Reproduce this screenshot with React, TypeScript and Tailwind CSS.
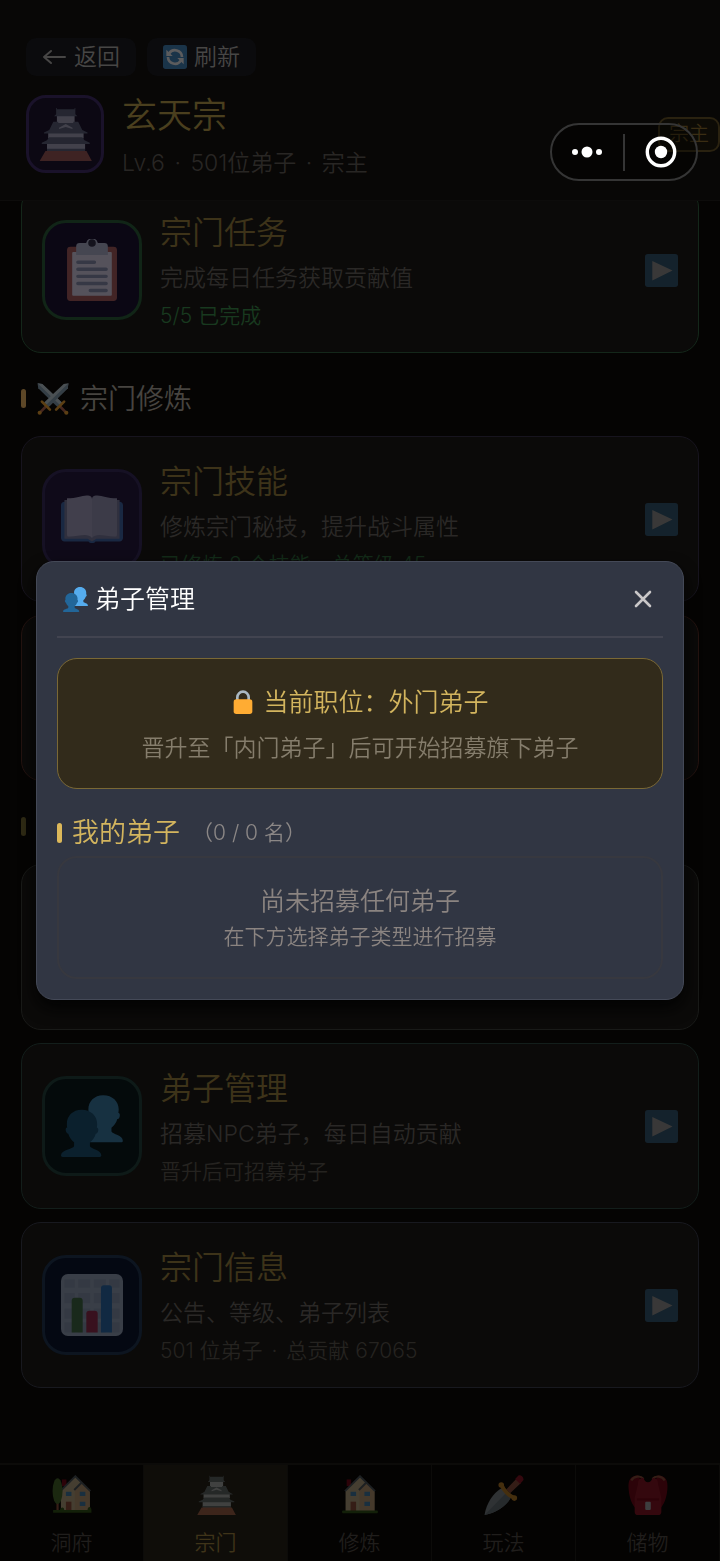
import * as React from "react"
import clsx from "clsx"

interface IconProps {
  className?: string
}

function CastleIcon({ className }: IconProps) {
  return (
    <svg viewBox="0 0 36 36" className={className} aria-hidden="true">
      <path fill="#CCD6DD" d="M12.6 5h11.8v6H12.6zM6.8 16h23.6v5H6.8zM6 24h25.4v4.5H6z" />
      <path fill="#66757F" d="M12.6.6v.9h11.8V.6h.5v4.2l1.4 1.4H10.700l1.400-1.400V.6z" />
      <path fill="#66757F" d="M10.200 9.800h3.300v.9h10v-.9h3.300l2.700 5.500 3.500 1.700v.6H4v-.6l3.500-1.700z" />
      <path fill="#CCD6DD" d="M18.500 11.300l4.500 2.500v.8l-4.500-1.300-4.500 1.300v-.8z" />
      <path fill="#66757F" d="M7.500 20.200h22l1.500 2 3.500 1.600v.8H2.500v-.8L6 22.200zM6 27.800h25.400v1.800H6z" />
      <path fill="#C1694F" d="M5 29.300h27.300L36 36.200H1z" />
    </svg>
  )
}

function ClipboardIcon({ className }: IconProps) {
  return (
    <svg viewBox="0 0 36 36" className={className} aria-hidden="true">
      <rect x="3.500" y="4.500" width="29" height="31.500" rx="2" fill="#C1694F" />
      <rect x="6.500" y="7.500" width="23" height="25.500" rx=".6" fill="#FFF" />
      <path fill="#CCD6DD" d="M10.800 2.300h3.800a3.500 3.500 0 0 1 6.800 0h3.800a2 2 0 0 1 2 2v5H8.800v-5a2 2 0 0 1 2-2z" />
      <circle cx="18" cy="2.300" r="2.200" fill="#292F33" />
      <path stroke="#99AAB5" strokeWidth="2" strokeLinecap="round" d="M9.800 13.500h9.600M9.800 17.600h16.400M9.800 21.700h16.400M9.800 25.800h16.400M17 29.900h9.200" />
    </svg>
  )
}

function SwordsIcon({ className }: IconProps) {
  return (
    <svg viewBox="0 0 36 36" className={className} aria-hidden="true">
      <path fill="#8CA9BF" d="M.6.400L6 1.200l22 20.800-5 5L1.400 6z" />
      <path fill="#CCDDE8" d="M.6.400L6 1.200l22 20.800-2.500 2.500z" />
      <path fill="#CCDDE8" d="M35.400.400L30 1.200 8 22l5 5L34.600 6z" />
      <path fill="#8CA9BF" d="M35.400.400L34.600 6 13 27l-2.500-2.500z" />
      <path fill="none" stroke="#BF6952" strokeWidth="3" d="M26 26.500l6.500 6.500M10 26.500L3.500 33" />
      <path fill="none" stroke="#FFAC33" strokeWidth="3" strokeLinecap="round" d="M30.500 21l-9 9M5.500 21l9 9" />
      <circle cx="33" cy="33.500" r="2.300" fill="#FFAC33" />
      <circle cx="3" cy="33.500" r="2.300" fill="#FFAC33" />
    </svg>
  )
}

function BookIcon({ className }: IconProps) {
  return (
    <svg viewBox="0 0 36 36" className={className} aria-hidden="true">
      <path fill="#3B88C3" d="M2 8h32c1.100 0 2 .9 2 2v19c0 1.100-.9 2-2 2H20c-.5 1.300-3.500 1.300-4 0H2c-1.100 0-2-.9-2-2V10c0-1.100.9-2 2-2z" />
      <path fill="#99AAB5" d="M2 7h32v22.500H20.500L18 31l-2.500-1.500H2z" />
      <path fill="#E1E8ED" d="M3.500 6C10 6 13 3.600 16.500 4.500c1 .3 1.500 1 1.500 2v22.500c-2.500-3.500-9-.5-13.500-.8-1 0-1-.9-1-1.700z" />
      <path fill="#CCD6DD" d="M32.500 6C26 6 23 3.600 19.500 4.500c-1 .3-1.500 1-1.500 2v22.500c2.500-3.500 9-.5 13.500-.8 1 0 1-.9 1-1.700z" />
    </svg>
  )
}

const BUST =
  "M12 8.600c-5.200 0-8.600 3.600-8.600 8.200 0 .9.1 1.400.2 2-.9.1-1 .9-.8 2 .2 1 .8 1.600 1.400 1.700.7 2.200 2 4 3.400 5v2.200C7 31.300 0 31.800 0 35c0 .7.300 1 1 1h21.400c.7 0 1-.3 1-1 0-3.200-6-3.700-6.600-5.300v-2.200c1.500-1 2.800-2.800 3.400-5 .8-.1 1.200-.7 1.400-1.700.2-1.100 0-1.800-.8-2 .1-.6.2-1.100.2-2 0-4.600-3.600-8.200-9-8.200z"

function PeopleIcon({ className }: IconProps) {
  return (
    <svg viewBox="0 0 36 36" className={className} aria-hidden="true">
      <path fill="#55ACEE" d={BUST} transform="translate(12.500 -8.500)" />
      <path fill="#226699" d={BUST} />
    </svg>
  )
}

function ChartIcon({ className }: IconProps) {
  return (
    <svg viewBox="0 0 36 36" className={className} aria-hidden="true">
      <rect width="36" height="36" rx="4" fill="#E1E8ED" />
      <path
        fill="#CCD6DD"
        d="M2 3h6v5H2zM10 3h7v5h-7zM19 3h7v5h-7zM28 3h6v5h-6zM2 11h6v6H2zM10 11h7v6h-7zM19 11h7v6h-7zM28 11h6v6h-6zM2 20h6v6H2zM10 20h7v6h-7zM19 20h7v6h-7zM28 20h6v6h-6zM2 28h6v6H2zM10 28h7v6h-7zM19 28h7v6h-7zM28 28h6v6h-6z"
      />
      <path fill="#5C913B" d="M6.200 34V15.500a1.700 1.700 0 0 1 1.700-1.700h3a1.700 1.700 0 0 1 1.700 1.700V34z" />
      <path fill="#DD2E44" d="M14.700 34V23a1.700 1.700 0 0 1 1.700-1.700h3.200a1.700 1.700 0 0 1 1.700 1.700v11z" />
      <path fill="#3B94D9" d="M23.200 34V8.200a1.700 1.700 0 0 1 1.700-1.700h3a1.700 1.700 0 0 1 1.700 1.700V34z" />
    </svg>
  )
}

function RefreshIcon({ className }: IconProps) {
  return (
    <svg viewBox="0 0 36 36" className={className} aria-hidden="true">
      <rect width="36" height="36" rx="4" fill="#3B88C3" />
      <path fill="none" stroke="#FFF" strokeWidth="4" d="M9 13A10.500 10.500 0 0 1 28.500 18M27 23A10.500 10.500 0 0 1 7.500 18" />
      <path fill="#FFF" d="M5 7v9.500h9.500zM31 29v-9.500h-9.500z" />
    </svg>
  )
}

function PlayIcon({ className }: IconProps) {
  return (
    <svg viewBox="0 0 36 36" className={className} aria-hidden="true">
      <rect width="36" height="36" rx="3" fill="#3B88C3" />
      <path fill="#FFF" d="M8 7.500l22 10.500L8 29z" />
    </svg>
  )
}

function LockIcon({ className }: IconProps) {
  return (
    <svg viewBox="0 0 36 36" className={className} aria-hidden="true">
      <path fill="none" stroke="#AAB8C2" strokeWidth="4" d="M9.500 18v-7a8.500 8.500 0 0 1 17 0v7" />
      <rect x="4" y="14" width="28" height="22" rx="4" fill="#FFAC33" />
    </svg>
  )
}

function House() {
  return (
    <>
      <path fill="#A0041E" d="M9 4h4v6H9z" />
      <path fill="#FFE8B6" d="M8 14L21 1.500 34 14v18.500H8z" />
      <path fill="#FFD2A0" d="M20.500 12.500l6-6L34 14v18.500H20.500z" />
      <path fill="none" stroke="#66757F" strokeWidth="1.800" d="M7.500 14.500L21 1.200l13.500 13.300M20 13.500l6.500-6.500" />
      <path fill="#55ACEE" d="M12.500 15h5v4h-5zM25 15h5v4h-5zM25 24h5v4h-5z" />
      <path fill="#C1694F" d="M12.500 24h5v9h-5z" />
    </>
  )
}

function GardenHouseIcon({ className }: IconProps) {
  return (
    <svg viewBox="0 0 36 36" className={className} aria-hidden="true">
      <House />
      <path fill="#C1694F" d="M4 22h2v10H4z" />
      <ellipse cx="5" cy="14.500" rx="4.500" ry="11.500" fill="#5C913B" />
      <path fill="#3E721D" d="M1 31.500h6c1-3 4-3 4 0h21c0-3.500 3.500-3.500 3.500 0V34H1z" />
    </svg>
  )
}

function HouseIcon({ className }: IconProps) {
  return (
    <svg viewBox="0 0 36 36" className={className} aria-hidden="true">
      <g transform="translate(-3 0)">
        <House />
      </g>
      <path fill="#3E721D" d="M2.500 32h31a1.500 1.500 0 0 1 0 2.500h-31a1.500 1.500 0 0 1 0-2.500z" />
    </svg>
  )
}

function DaggerIcon({ className }: IconProps) {
  return (
    <svg viewBox="0 0 36 36" className={className} aria-hidden="true">
      <path fill="#AAB8C2" d="M15.500 12l8.500 8.500C20.500 27.500 11 34 .5 36 2 26 8 16.500 15.500 12z" />
      <path fill="#8899A6" d="M19.800 16.200l4.200 4.300C20.500 27.500 11 34 .5 36z" />
      <path fill="#BF6952" d="M20 13l9-9.500 4 4-9.500 9z" />
      <path fill="none" stroke="#FFAC33" strokeWidth="3.500" strokeLinecap="round" d="M16 9.500c1.500 4 6.500 9.500 11 11" />
      <circle cx="15.500" cy="9" r="2.500" fill="#FFAC33" />
      <circle cx="27.300" cy="20.800" r="2.500" fill="#FFAC33" />
      <path fill="#BE1931" d="M28 3.500L31 .5c2-1 5 1.500 4.500 4L32.500 8z" />
    </svg>
  )
}

function BackpackIcon({ className }: IconProps) {
  return (
    <svg viewBox="0 0 36 36" className={className} aria-hidden="true">
      <path fill="#A0041E" d="M9 .500C2 .5 0 5 .5 12c.4 6 2 13 5.500 17h5V4zM27 .5C34 .5 36 5 35.500 12c-.4 6-2 13-5.500 17h-5V4z" />
      <path fill="none" stroke="#C1694F" strokeWidth="2" d="M3 5c2-4 8-5 11-1.500M33 5c-2-4-8-5-11-1.500" />
      <path fill="#BE1931" d="M9 8c0-4 2.500-6 5-5 1 2.500 2 3.500 4 3.500s3-1 4-3.500c2.500-1 5 1 5 5l3 13v12a3 3 0 0 1-3 3H9a3 3 0 0 1-3-3V21z" />
      <path fill="#A0041E" d="M8 21h20v2H8z" />
      <rect x="15.500" y="24" width="5" height="7.500" rx="1" fill="#E1E8ED" />
    </svg>
  )
}

interface SectCard {
  icon?: (props: IconProps) => React.ReactElement
  title?: string
  desc?: string
  status?: string[]
  statusClass?: string
  border: string
  iconBox?: string
  bright?: boolean
}

const TASK_CARDS: SectCard[] = [
  {
    icon: ClipboardIcon,
    title: "宗门任务",
    desc: "完成每日任务获取贡献值",
    status: ["5/5 已完成"],
    statusClass: "text-[#18391f]",
    border: "border-[#14271a]",
    iconBox: "border-[#112517] bg-[#0b0714]",
    bright: true,
  },
]

const TRAINING_CARDS: SectCard[] = [
  {
    icon: BookIcon,
    title: "宗门技能",
    desc: "修炼宗门秘技，提升战斗属性",
    status: ["已修炼 8 个技能，总等级 45"],
    statusClass: "text-[#132c19]",
    border: "border-[#17141e]",
    iconBox: "border-[#161124] bg-[#0f0a19]",
  },
  { border: "border-[#241310]" },
]

const MANAGE_CARDS: SectCard[] = [
  { border: "border-[#191a18]" },
  {
    icon: PeopleIcon,
    title: "弟子管理",
    desc: "招募NPC弟子，每日自动贡献",
    status: ["晋升后可招募弟子"],
    statusClass: "text-[#252320]",
    border: "border-[#131e1b]",
    iconBox: "border-[#0e1a18] bg-[#040a0b]",
  },
  {
    icon: ChartIcon,
    title: "宗门信息",
    desc: "公告、等级、弟子列表",
    status: ["501 位弟子", "总贡献 67065"],
    statusClass: "text-[#252320]",
    border: "border-[#18191f]",
    iconBox: "border-[#0d1520] bg-[#040812]",
  },
]

const NAV_ITEMS = [
  { label: "洞府", icon: GardenHouseIcon },
  { label: "宗门", icon: CastleIcon, active: true },
  { label: "修炼", icon: HouseIcon },
  { label: "玩法", icon: DaggerIcon },
  { label: "储物", icon: BackpackIcon },
]

// Joins the parts with a spaced middle dot
function Dotted({ parts }: { parts: string[] }) {
  return (
    <>
      {parts.map((part, i) => (
        <React.Fragment key={part}>
          {i > 0 && <span className="mx-[3px]"> · </span>}
          {part}
        </React.Fragment>
      ))}
    </>
  )
}

function Card({ card }: { card: SectCard }) {
  const Icon = card.icon

  return (
    <button
      type="button"
      className={clsx(
        "flex h-[166px] w-full items-center gap-[18px] rounded-[20px] border bg-[#0b0a09] px-5 text-left",
        card.border,
      )}
    >
      {Icon && (
        <>
          <span
            className={clsx(
              "flex size-[100px] shrink-0 items-center justify-center rounded-[24px] border-[3px]",
              card.iconBox,
            )}
          >
            <Icon className={clsx("size-[62px]", card.bright ? "opacity-30" : "opacity-24")} />
          </span>
          <span className="flex min-w-0 flex-1 flex-col gap-2 pt-[2px]">
            <span className="text-[32px] leading-[44px] text-[#3d3319]">{card.title}</span>
            <span className="text-[23px] leading-[30px] text-[#2a2826]">{card.desc}</span>
            <span className={clsx("text-[21px] leading-[30px]", card.statusClass)}>
              <Dotted parts={card.status ?? []} />
            </span>
          </span>
          <PlayIcon className="size-[33px] shrink-0 opacity-19" />
        </>
      )}
    </button>
  )
}

function SectionTitle({ children, bar }: { children?: React.ReactNode; bar: string }) {
  return (
    <h2 className="flex h-[83px] items-center gap-[11px] pt-2 text-[28px] leading-10 text-[#474440]">
      <span className={clsx("h-[19px] w-[5px] rounded-full", bar)} />
      {children}
    </h2>
  )
}

function DiscipleDialog() {
  return (
    <div className="fixed inset-0 z-20 flex items-center justify-center">
      <div
        role="dialog"
        aria-labelledby="dialog-title"
        className="w-[90%] rounded-[18px] border border-[#444957] bg-[#313643] px-5 pb-5 shadow-[0_8px_16px_#030303]"
      >
        <div className="flex h-[76px] items-center justify-between border-b-2 border-[#424450] pr-2 pl-[6px]">
          <h2 id="dialog-title" className="flex items-center gap-[7px] text-[25px] leading-8 text-white">
            <PeopleIcon className="size-[25px]" />
            弟子管理
          </h2>
          <button type="button" aria-label="关闭" className="flex size-6 items-center justify-center">
            <svg viewBox="0 0 18 18" className="size-[18px]" aria-hidden="true">
              <path d="M2 2l14 14M16 2L2 16" stroke="#c9c7c8" strokeWidth="2.600" strokeLinecap="round" />
            </svg>
          </button>
        </div>

        {/* Current rank */}
        <div className="mt-5 flex h-[131px] flex-col items-center justify-center gap-3 rounded-[20px] border border-[#7a6835] bg-[#322b1b] pt-[2px]">
          <p className="flex items-center gap-2 text-[25px] leading-[34px] text-[#d3b55e]">
            <LockIcon className="size-6" />
            当前职位：外门弟子
          </p>
          <p className="text-[23px] leading-[34px] text-[#857d6c]">晋升至「内门弟子」后可开始招募旗下弟子</p>
        </div>

        <h3 className="flex h-[67px] items-center pt-5 text-[27px] leading-10 text-[#d3b55e]">
          <span className="mr-[10px] h-5 w-[5px] rounded-full bg-[#dcb85a]" />
          我的弟子
          <span className="ml-3 text-[21px] text-[#8b8786]">（0 / 0 名）</span>
        </h3>

        <div className="flex h-[123px] flex-col items-center justify-center gap-1 rounded-[20px] border-2 border-[#37383f] pt-[2px]">
          <p className="text-[25px] leading-8 text-[#8b8481]">尚未招募任何弟子</p>
          <p className="text-[21px] leading-8 text-[#8b8481]">在下方选择弟子类型进行招募</p>
        </div>
      </div>
    </div>
  )
}

export default function App() {
  return (
    <div className="flex min-h-screen flex-col overflow-hidden bg-[#050403] font-['Inter','Noto_Sans_CJK_SC',sans-serif] font-[350]">
      <header className="relative z-10 h-[201px] border-b border-[#0d0c0b] bg-[#080706] pt-[38px] pl-[26px]">
        <div className="flex gap-[11px]">
          <button
            type="button"
            className="flex h-[38px] items-center gap-2 rounded-[10px] bg-[#0b0b0d] px-4 text-[23px] text-[#474645]"
          >
            <svg viewBox="0 0 24 16" className="h-4 w-6" aria-hidden="true">
              <path
                d="M23 8H2M9 2L2 8l7 6"
                fill="none"
                stroke="currentColor"
                strokeWidth="2"
                strokeLinecap="round"
                strokeLinejoin="round"
              />
            </svg>
            返回
          </button>
          <button
            type="button"
            className="flex h-[38px] items-center gap-[7px] rounded-[10px] bg-[#0b0b0d] px-4 text-[23px] text-[#474645]"
          >
            <RefreshIcon className="size-6 opacity-33" />
            刷新
          </button>
        </div>

        <div className="mt-[14px] flex items-center">
          <span className="flex size-[78px] shrink-0 items-center justify-center rounded-[20px] border-[3px] border-[#1a122a] bg-[#0c0813]">
            <CastleIcon className="size-[54px] opacity-28" />
          </span>
          <div className="ml-[18px] flex-1">
            <h1 className="text-[35px] leading-[50px] text-[#4a3f1e]">玄天宗</h1>
            <p className="mt-2 text-[23px] leading-[30px] text-[#282624]">
              <Dotted parts={["Lv.6", "501位弟子", "宗主"]} />
            </p>
          </div>
          <span className="h-[35px] shrink-0 rounded-[10px] border-2 border-[#2a2210] bg-[#0d0b06] px-[9px] text-[20px] leading-[31px] text-[#3a2d13]">
            宗主
          </span>
        </div>

        {/* Mini program controls float over the header */}
        <div className="absolute top-[123px] right-[22px] flex h-[58px] w-[148px] items-center rounded-full border-2 border-[#353535] bg-black/35">
          <button type="button" aria-label="更多" className="flex flex-1 justify-center">
            <svg viewBox="0 0 32 12" className="h-3 w-8" fill="#fff" aria-hidden="true">
              <circle cx="3" cy="6" r="3" />
              <circle cx="15" cy="6" r="5.500" />
              <circle cx="27" cy="6" r="3" />
            </svg>
          </button>
          <span className="h-[37px] w-[2px] bg-[#353535]" />
          <button type="button" aria-label="关闭小程序" className="flex flex-1 justify-center">
            <svg viewBox="0 0 32 32" className="size-8" aria-hidden="true">
              <circle cx="16" cy="16" r="13.700" fill="none" stroke="#fff" strokeWidth="3.400" />
              <circle cx="16" cy="16" r="6.200" fill="#fff" />
            </svg>
          </button>
        </div>
      </header>

      <main className="-mt-[14px] px-[21px]">
        {TASK_CARDS.map((card, i) => (
          <Card key={i} card={card} />
        ))}

        <SectionTitle bar="bg-[#5d4727]">
          <SwordsIcon className="size-8 opacity-35" />
          宗门修炼
        </SectionTitle>
        <div className="flex flex-col gap-[13px]">
          {TRAINING_CARDS.map((card, i) => (
            <Card key={i} card={card} />
          ))}
        </div>

        <SectionTitle bar="bg-[#2f2a14]" />
        <div className="flex flex-col gap-[13px]">
          {MANAGE_CARDS.map((card, i) => (
            <Card key={i} card={card} />
          ))}
        </div>
      </main>

      <nav className="mt-auto grid h-[98px] grid-cols-5 border-t-2 border-[#0c0b09] bg-[#040302]">
        {NAV_ITEMS.map(({ label, icon: Icon, active }) => (
          <a
            key={label}
            href="#"
            className={clsx(
              "flex flex-col items-center gap-[11px] border-r border-[#0c0b09] pt-[10px] text-[21px] leading-[34px]",
              active ? "bg-[#0f0d09] text-[#3f3419]" : "text-[#201e1c]",
            )}
          >
            <Icon className="size-10 shrink-0 opacity-26" />
            {label}
          </a>
        ))}
      </nav>

      <DiscipleDialog />
    </div>
  )
}
